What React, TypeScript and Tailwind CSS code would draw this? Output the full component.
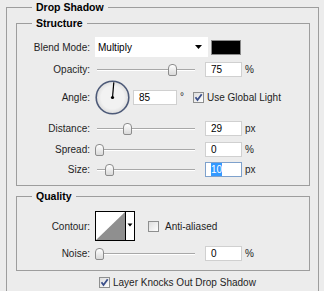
import type { ReactNode } from 'react'

function Label({ children }: { children: ReactNode }) {
  return <span className="w-[73px] shrink-0 text-right text-[#1e1e1e]">{children}</span>
}

function NumberBox({ value, width = 37, focused = false }: { value: string; width?: number; focused?: boolean }) {
  return (
    <div
      className={`flex h-[15px] items-center bg-white pl-[5px] leading-[13px] ${
        focused ? 'border border-[#7ea1cc]' : 'border border-[#d0d0d0]'
      } ${width === 44 ? 'w-[44px]' : 'w-[37px]'}`}
    >
      {focused ? <span className="bg-[#3399ff] text-white">{value}</span> : <span>{value}</span>}
    </div>
  )
}

function Slider({ value }: { value: number }) {
  const left = Math.round(value * 0.97)
  return (
    <div className="relative flex h-[15px] w-[102px] shrink-0 items-center">
      <div className="ml-[2px] h-[2px] w-[98px] border-t border-[#a8a8a8] bg-white" />
      <div
        className="absolute top-[2px] h-[12px] w-[9px] rounded-t-[4px] rounded-b-[2px] border border-[#8c8c8c] bg-gradient-to-b from-white to-[#d9d9d9]"
        style={{ left }}
      />
    </div>
  )
}

function Check({ checked }: { checked: boolean }) {
  return (
    <svg width="11" height="11" viewBox="0 0 11 11" className="shrink-0">
      <defs>
        <linearGradient id={checked ? 'cbOn' : 'cbOff'} x1="0" y1="0" x2="1" y2="1">
          <stop offset="0" stopColor="#dcdcdc" />
          <stop offset="1" stopColor="#ffffff" />
        </linearGradient>
      </defs>
      <rect x="0.5" y="0.5" width="10" height="10" fill={`url(#${checked ? 'cbOn' : 'cbOff'})`} stroke="#8e8f8f" />
      {checked && <path d="M2.5 5.2 L4.5 8 L8.7 2.3" fill="none" stroke="#3b4f8a" strokeWidth="1.8" />}
    </svg>
  )
}

function Row({ label, value, unit, mt }: { label: string; value: number; unit: string; mt: string }) {
  return (
    <div className={`flex h-[15px] items-center ${mt}`}>
      <Label>{label}</Label>
      <div className="ml-[5px]">
        <Slider value={value} />
      </div>
      <div className="ml-[8px]">
        <NumberBox value={String(value)} focused={label === 'Size:'} />
      </div>
      <span className="ml-[3px] text-[#1e1e1e]">{unit}</span>
    </div>
  )
}

export default function App() {
  return (
    <div className="h-[291px] w-[324px] overflow-hidden bg-[#ececec] pl-[6px] pt-[1px] font-['Liberation_Sans',Arial,sans-serif] text-[10px] text-black">
      <fieldset className="w-[313px] border border-[#9d9d9d] pb-[30px] pl-[9px] pr-[8px] pt-[4px]">
        <legend className="ml-[16px] px-[4px] text-[10.5px] font-bold leading-[12px]">Drop Shadow</legend>

        <fieldset className="w-[294px] border border-[#9d9d9d] pb-[8px]">
          <legend className="ml-[15px] px-[4px] text-[10.5px] font-bold leading-[12px]">Structure</legend>

          <div className="mt-[8px] flex h-[20px] items-center">
            <Label>Blend Mode:</Label>
            <div className="ml-[5px] flex h-[20px] w-[113px] items-center justify-between bg-white pl-[3px] pr-[6px]">
              <span>Multiply</span>
              <svg width="7" height="4" viewBox="0 0 7 4">
                <path d="M0 0 H7 L3.5 4 Z" fill="#000" />
              </svg>
            </div>
            <div className="ml-[3px] h-[15px] w-[30px] border border-[#8a8a8a] bg-black" />
          </div>

          <Row label="Opacity:" value={75} unit="%" mt="mt-[5px]" />

          <div className="mt-[3px] flex h-[35px] items-center">
            <Label>Angle:</Label>
            <svg width="35" height="35" viewBox="0 0 35 35" className="ml-[5px] shrink-0">
              <defs>
                <radialGradient id="dial" cx="0.5" cy="0.5" r="0.5">
                  <stop offset="0.7" stopColor="#f2f2f2" />
                  <stop offset="1" stopColor="#dcdcdc" />
                </radialGradient>
              </defs>
              <circle cx="17.5" cy="17.5" r="16.3" fill="url(#dial)" stroke="#4d5a78" strokeWidth="1.6" />
              <line x1="17.5" y1="17.5" x2="18.8" y2="2.4" stroke="#000" strokeWidth="1.2" />
              <circle cx="17.5" cy="17.5" r="1.6" fill="#000" />
            </svg>
            <div className="ml-[3px]">
              <NumberBox value="85" width={44} />
            </div>
            <span className="ml-[3px] self-start pt-[9px] text-[#1e1e1e]">°</span>
            <div className="ml-[9px] flex items-center">
              <Check checked />
              <span className="ml-[3px] text-[#1e1e1e]">Use Global Light</span>
            </div>
          </div>

          <Row label="Distance:" value={29} unit="px" mt="mt-[6px]" />
          <Row label="Spread:" value={0} unit="%" mt="mt-[6px]" />
          <Row label="Size:" value={10} unit="px" mt="mt-[5px]" />
        </fieldset>

        <fieldset className="mt-[4px] w-[294px] border border-[#9d9d9d] pb-[9px]">
          <legend className="ml-[15px] px-[4px] text-[10.5px] font-bold leading-[12px]">Quality</legend>

          <div className="mt-[9px] flex h-[30px] items-center">
            <Label>Contour:</Label>
            <svg width="40" height="30" viewBox="0 0 40 30" className="ml-[5px] shrink-0">
              <rect x="0.5" y="0.5" width="39" height="29" fill="#fff" stroke="#000" />
              <path d="M1 29 L30 1 L30 29 Z" fill="#8f8f8f" />
              <line x1="30.5" y1="1" x2="30.5" y2="29" stroke="#000" />
              <path d="M32.5 12.5 H37.5 L35 15.5 Z" fill="#000" />
            </svg>
            <div className="ml-[13px] flex items-center">
              <Check checked={false} />
              <span className="ml-[6px] text-[#1e1e1e]">Anti-aliased</span>
            </div>
          </div>

          <Row label="Noise:" value={0} unit="%" mt="mt-[5px]" />
        </fieldset>

        <div className="mt-[5px] flex h-[12px] items-center pl-[83px]">
          <Check checked />
          <span className="ml-[3px] text-[#1e1e1e]">Layer Knocks Out Drop Shadow</span>
        </div>
      </fieldset>
    </div>
  )
}
